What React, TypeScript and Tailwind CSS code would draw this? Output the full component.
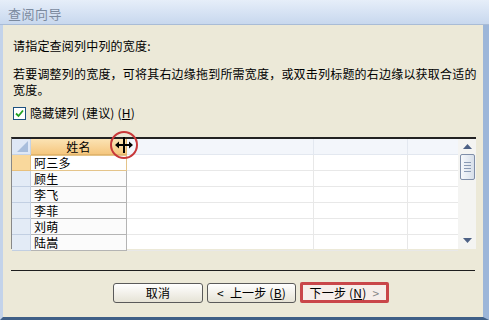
import React from "react";

const font = { fontFamily: '"Noto Sans CJK SC", "Liberation Sans", sans-serif' };

const rows = ["阿三多", "顾生", "李飞", "李菲", "刘萌", "陆嵩"];

function Btn({ children, w, className = "" }: { children: React.ReactNode; w: string; className?: string }) {
  return (
    <div
      className={`h-[20px] ${w} rounded-[3px] border border-[#5a5a5a] bg-gradient-to-b from-[#ffffff] to-[#e6e3d6] flex items-center justify-center text-[12px] text-black leading-none ${className}`}
    >
      {children}
    </div>
  );
}

export default function App() {
  return (
    <div className="w-[489px] h-[320px] bg-[#ece9d8] flex flex-col overflow-hidden relative" style={font}>
      {/* title bar */}
      <div className="h-[25px] shrink-0 bg-gradient-to-b from-[#e6eef9] to-[#c8d8ee] border-b border-[#a9bcd6] flex items-center pl-[8px] pt-[3px]">
        <span className="text-[13px] text-[#7b8a9e] tracking-[0.5px]">查阅向导</span>
      </div>
      {/* body */}
      <div className="flex-1 flex flex-col border-l-[3px] border-l-[#c3d3ea] border-r-[6px] border-r-[#9cb6d9] border-b-[3px] border-b-[#3f5f86] text-black text-[12px] tracking-[0.2px]">
        <div className="mt-[13px] pl-[10px] h-[16px] leading-[16px]">请指定查阅列中列的宽度:</div>
        <div className="mt-[12px] pl-[10px] leading-[16px] whitespace-nowrap">
          若要调整列的宽度，可将其右边缘拖到所需宽度，或双击列标题的右边缘以获取合适的
          <br />
          宽度。
        </div>
        <div className="mt-[7px] pl-[10px] h-[16px] flex items-center gap-[4px]">
          <div className="w-[13px] h-[13px] border border-[#1c5180] bg-white flex items-center justify-center">
            <svg width="9" height="9" viewBox="0 0 9 9">
              <path d="M1 4.5 L3.5 7 L8 1.5" stroke="#21a121" strokeWidth="1.8" fill="none" />
            </svg>
          </div>
          <span>隐藏键列 (建议) (<u>H</u>)</span>
        </div>
        {/* grid */}
        <div className="mt-[16px] ml-[8px] w-[465px] h-[112px] border-t-2 border-t-[#222] border-l border-l-[#888] bg-white flex relative">
          <div className="flex-1 flex flex-col">
            {/* header */}
            <div className="h-[16px] flex shrink-0">
              <div className="w-[19px] bg-[#dfe8f6] border-r border-b border-[#c5d3e7] relative">
                <svg className="absolute right-[2px] bottom-[2px]" width="11" height="11" viewBox="0 0 11 11">
                  <path d="M11 0 L11 11 L0 11 Z" fill="#a9bedc" />
                </svg>
              </div>
              <div className="w-[96px] bg-gradient-to-b from-[#fbe3b4] to-[#f5c77f] border-r border-b border-[#e2b46c] flex items-center justify-center text-[12px] leading-none">
                姓名
              </div>
              <div className="w-[187px] bg-[#f3f6fb] border-r border-b border-[#e3e8f0]" />
              <div className="w-[94px] bg-[#f3f6fb] border-r border-b border-[#e3e8f0]" />
              <div className="flex-1 bg-[#f3f6fb] border-b border-[#e3e8f0]" />
            </div>
            {rows.map((r, i) => (
              <div key={r} className="h-[16px] flex shrink-0">
                <div
                  className={`w-[19px] border-r border-b ${
                    i === 0 ? "bg-[#f9d89c] border-[#e8c07c]" : "bg-[#e3ebf6] border-[#c2cfe2]"
                  }`}
                />
                <div
                  className={`w-[96px] flex items-center pl-[3px] text-[12px] leading-none ${
                    i === 0
                      ? "bg-white border border-[#e4c48a] border-l-0"
                      : "bg-[#fbfbfb] border-r border-b border-[#b4b4b4]"
                  }`}
                >
                  {r}
                </div>
                <div className="w-[187px] border-r border-b border-[#e8e8e8]" />
                <div className="w-[94px] border-r border-b border-[#e8e8e8]" />
                <div className="flex-1 border-b border-[#e8e8e8]" />
              </div>
            ))}
          </div>
          {/* scrollbar */}
          <div className="w-[18px] bg-[#f4f4f2] flex flex-col items-center">
            <svg className="mt-[5px]" width="9" height="5" viewBox="0 0 9 5">
              <path d="M0 5 L4.5 0 L9 5 Z" fill="#4d6185" />
            </svg>
            <div className="mt-[5px] w-[15px] h-[26px] rounded-[2px] border border-[#7f8ea8] bg-gradient-to-r from-[#f6f8fb] to-[#d7dfea] flex flex-col items-center justify-center gap-[2px]">
              {[0, 1, 2, 3].map((k) => (
                <div key={k} className="w-[7px] h-[1px] bg-[#8a9ab4]" />
              ))}
            </div>
            <div className="flex-1" />
            <svg className="mb-[6px]" width="9" height="5" viewBox="0 0 9 5">
              <path d="M0 0 L4.5 5 L9 0 Z" fill="#4d6185" />
            </svg>
          </div>
        </div>
        {/* separator */}
        <div className="mt-[21px] ml-[8px] w-[464px] h-[1px] bg-[#1e1e1e]" />
        {/* buttons */}
        <div className="mt-[12px] ml-[110px] flex gap-[4px]">
          <Btn w="w-[90px]">取消</Btn>
          <Btn w="w-[89px]">
            <span className="mr-[6px]">&lt;</span>上一步 (<u>B</u>)
          </Btn>
          <div className="h-[21px] w-[89px] border-[3px] border-[#c9464a] rounded-[2px] bg-[#f6eeea] flex items-center justify-center text-[12px] leading-none -mt-[1px]">
            下一步 (<u>N</u>)<span className="ml-[6px] text-[#888]">&gt;</span>
          </div>
        </div>
      </div>
      {/* resize cursor with red circle */}
      <div className="absolute left-[110px] top-[131px] w-[28px] h-[28px] rounded-full border-[2.5px] border-[#c8383a] flex items-center justify-center">
        <svg width="20" height="18" viewBox="0 0 20 18">
          <path d="M10 1 V17" stroke="#000" strokeWidth="2" />
          <path d="M2 9 H18" stroke="#000" strokeWidth="2" />
          <path d="M1 9 L5 5.5 V12.5 Z M19 9 L15 5.5 V12.5 Z" fill="#000" />
        </svg>
      </div>
    </div>
  );
}
